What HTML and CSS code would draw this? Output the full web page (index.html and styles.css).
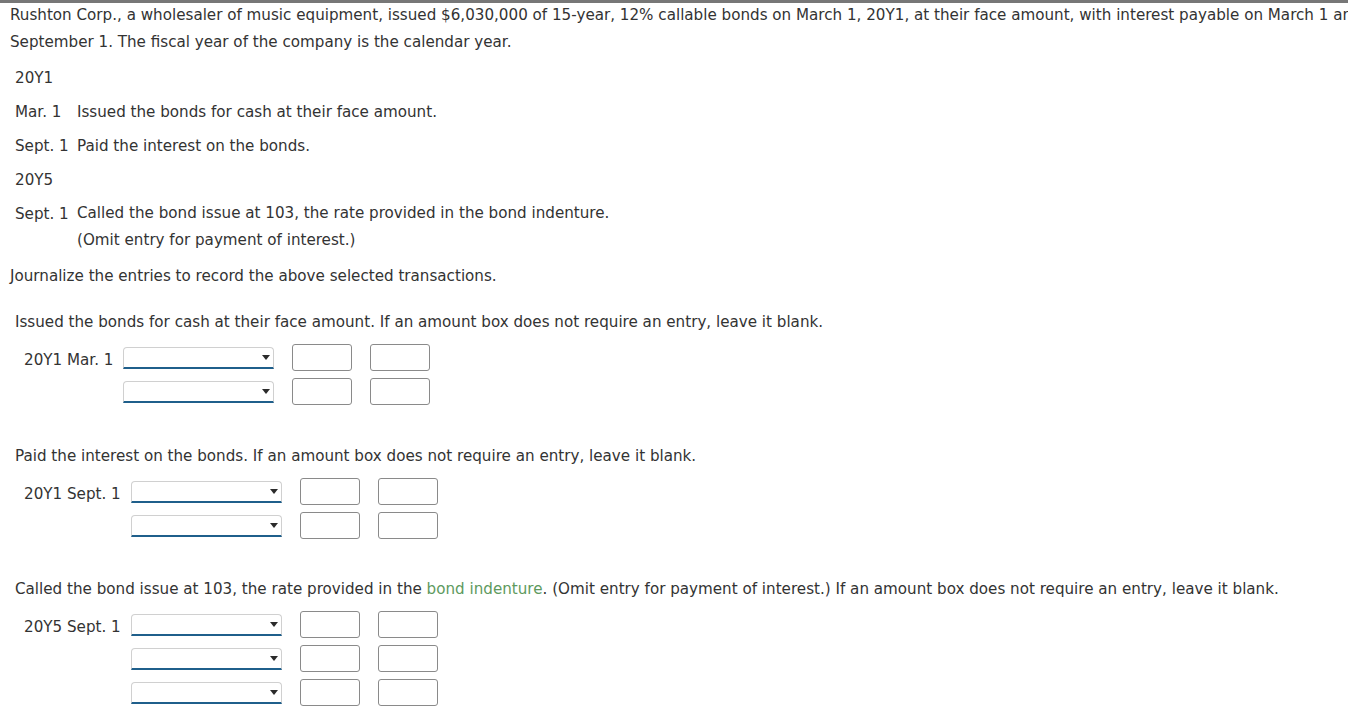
FILE: index.html
```html
<!DOCTYPE html>
<html>
<head>
<meta charset="utf-8">
<link rel="stylesheet" href="styles.css">
</head>
<body>
<div class="page">
  <p class="intro">Rushton Corp., a wholesaler of music equipment, issued $6,030,000 of 15-year, 12% callable bonds on March 1, 20Y1, at their face amount, with interest payable on March 1 and September 1. The fiscal year of the company is the calendar year.</p>

  <div class="events">
    <div class="year">20Y1</div>
    <div class="event"><span class="edate">Mar. 1</span><span class="etext">Issued the bonds for cash at their face amount.</span></div>
    <div class="event"><span class="edate">Sept. 1</span><span class="etext">Paid the interest on the bonds.</span></div>
    <div class="year">20Y5</div>
    <div class="event two"><span class="edate">Sept. 1</span><span class="etext">Called the bond issue at 103, the rate provided in the bond indenture.<br>(Omit entry for payment of interest.)</span></div>
  </div>

  <p class="instr">Journalize the entries to record the above selected transactions.</p>

  <section class="part">
    <p class="q">Issued the bonds for cash at their face amount. If an amount box does not require an entry, leave it blank.</p>
    <div class="journal">
      <div class="jlabel">20Y1 Mar. 1</div>
      <div class="sel"></div><div class="box"></div><div class="box"></div>
      <div class="sel"></div><div class="box"></div><div class="box"></div>
    </div>
  </section>

  <section class="part p2">
    <p class="q">Paid the interest on the bonds. If an amount box does not require an entry, leave it blank.</p>
    <div class="journal">
      <div class="jlabel">20Y1 Sept. 1</div>
      <div class="sel"></div><div class="box"></div><div class="box"></div>
      <div class="sel"></div><div class="box"></div><div class="box"></div>
    </div>
  </section>

  <section class="part p3">
    <p class="q">Called the bond issue at 103, the rate provided in the <span class="term">bond indenture</span>. (Omit entry for payment of interest.) If an amount box does not require an entry, leave it blank.</p>
    <div class="journal">
      <div class="jlabel">20Y5 Sept. 1</div>
      <div class="sel"></div><div class="box"></div><div class="box"></div>
      <div class="sel"></div><div class="box"></div><div class="box"></div>
      <div class="sel"></div><div class="box"></div><div class="box"></div>
    </div>
  </section>
</div>
</body>
</html>
```

FILE: styles.css
```css
html, body {
  margin: 0;
  padding: 0;
  background: #fff;
}
body {
  font-family: "DejaVu Sans", Verdana, sans-serif;
  font-size: 15.15px;
  color: #333;
  overflow: hidden;
  width: 1348px;
  height: 715px;
}
.page {
  border-top: 3px solid #777;
  padding: 0 0 0 10px;
  width: 1500px;
}
.intro {
  margin: -1px 0 0 0;
  line-height: 27px;
  width: 1385px;
}
.events {
  padding-left: 5px;
  margin-top: 5px;
}
.year, .event {
  line-height: 34px;
}
.event {
  display: flex;
}
.edate {
  width: 62px;
  flex: none;
}
.event.two .etext {
  line-height: 27px;
  padding-top: 3px;
}
.instr {
  margin: 12px 0 0 0;
  line-height: 20px;
}
.part {
  padding-left: 5px;
  margin-top: 26px;
}
.q {
  margin: 0;
  line-height: 20px;
}
.journal {
  display: grid;
  grid-template-columns: auto 151px 60px 60px;
  column-gap: 18px;
  row-gap: 7px;
  align-items: center;
  margin-top: 12px;
  padding-left: 9px;
  width: max-content;
}
.jlabel {
  grid-column: 1;
  grid-row: 1;
  margin-right: -8px;
  padding-top: 4px;
}
.sel {
  grid-column: 2;
  height: 19px;
  border: 1px solid #d0d0d0;
  border-bottom: 2px solid #1f5f8b;
  border-radius: 4px 4px 0 0;
  background: #fff;
  position: relative;
}
.sel::after {
  content: "";
  position: absolute;
  right: 3px;
  top: 7px;
  border-left: 4.5px solid transparent;
  border-right: 4.5px solid transparent;
  border-top: 5px solid #2b2b2b;
}
.box {
  height: 25px;
  border: 1px solid #8a8a8a;
  border-radius: 3px;
  background: #fff;
}
.term {
  color: #5e9a5e;
}
.p2 {
  margin-top: 41px;
}
.p3 {
  margin-top: 40px;
}
```
